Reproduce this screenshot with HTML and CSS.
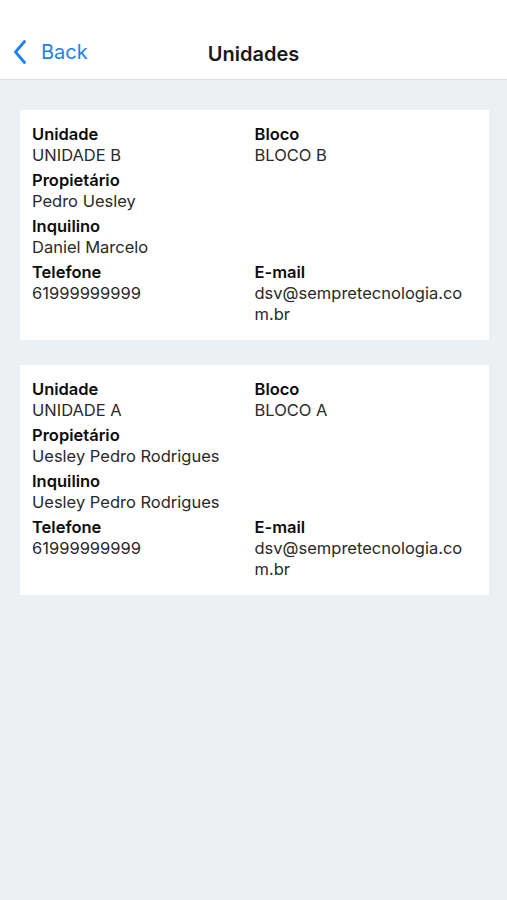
FILE: index.html
```html
<!DOCTYPE html>
<html lang="pt-BR">
<head>
    <meta charset="UTF-8">
    <meta name="viewport" content="width=device-width, initial-scale=1.0">
    <title>Unidades</title>
    <link rel="stylesheet" href="styles.css">
</head>
<body>

    <header class="nav-bar">
        <a class="back-button" href="#">
            <svg class="back-icon" width="12" height="24" viewBox="0 0 12 24">
                <polyline points="10.5,1.5 1.5,12 10.5,22.5" fill="none" stroke="currentColor" stroke-width="2.8" stroke-linecap="round" stroke-linejoin="round"/>
            </svg>
            <span>Back</span>
        </a>
        <h1 class="nav-title">Unidades</h1>
        <div></div>
    </header>

    <main class="unit-list">
        <!-- Unidade B -->
        <div class="unit-card">
            <div class="field">
                <div class="label">Unidade</div>
                <div class="value">UNIDADE B</div>
            </div>
            <div class="field">
                <div class="label">Bloco</div>
                <div class="value">BLOCO B</div>
            </div>
            <div class="field">
                <div class="label">Propietário</div>
                <div class="value">Pedro Uesley</div>
            </div>
            <div class="field"></div>
            <div class="field">
                <div class="label">Inquilino</div>
                <div class="value">Daniel Marcelo</div>
            </div>
            <div class="field"></div>
            <div class="field">
                <div class="label">Telefone</div>
                <div class="value">61999999999</div>
            </div>
            <div class="field">
                <div class="label">E-mail</div>
                <div class="value email">dsv@sempretecnologia.com.br</div>
            </div>
        </div>

        <!-- Unidade A -->
        <div class="unit-card">
            <div class="field">
                <div class="label">Unidade</div>
                <div class="value">UNIDADE A</div>
            </div>
            <div class="field">
                <div class="label">Bloco</div>
                <div class="value">BLOCO A</div>
            </div>
            <div class="field">
                <div class="label">Propietário</div>
                <div class="value">Uesley Pedro Rodrigues</div>
            </div>
            <div class="field"></div>
            <div class="field">
                <div class="label">Inquilino</div>
                <div class="value">Uesley Pedro Rodrigues</div>
            </div>
            <div class="field"></div>
            <div class="field">
                <div class="label">Telefone</div>
                <div class="value">61999999999</div>
            </div>
            <div class="field">
                <div class="label">E-mail</div>
                <div class="value email">dsv@sempretecnologia.com.br</div>
            </div>
        </div>
    </main>

</body>
</html>
```

FILE: styles.css
```css
body {
    font-family: Inter, "Liberation Sans", Arial, sans-serif;
    background-color: #edf0f3; /* light grey screen background */
    color: #111111;
    margin: 0;
    min-height: 100vh;
}

/* Top navigation bar */
.nav-bar {
    display: grid;
    grid-template-columns: 1fr auto 1fr;
    align-items: center;
    height: 80px;
    padding: 28px 0 0 14px;
    box-sizing: border-box;
    background-color: #ffffff;
    border-bottom: 1px solid #dcdde0;
}

.back-button {
    display: flex;
    align-items: center;
    gap: 15px;
    margin-bottom: 3px;
    justify-self: start;
    color: #1f80f2;
    text-decoration: none;
    font-size: 20px;
}

.back-icon {
    display: block;
}

.nav-title {
    margin: 0 0 0 -14px;
    font-size: 20px;
    font-weight: 600;
    color: #1a1a1a;
}

/* List of units */
.unit-list {
    display: flex;
    flex-direction: column;
    gap: 25px;
    padding: 30px 18px 0 20px;
}

.unit-card {
    display: grid;
    grid-template-columns: 1fr 1fr;
    row-gap: 4px;
    background-color: #ffffff;
    padding: 14px 12px 15px 12px;
}

.field {
    font-size: 16.5px;
    line-height: 21px;
}

.label {
    font-weight: 600;
    color: #0d0d0d;
}

.value {
    color: #2a2a2a;
}

.email {
    max-width: 212px;
    overflow-wrap: anywhere; /* long address breaks like in the app */
}
```
